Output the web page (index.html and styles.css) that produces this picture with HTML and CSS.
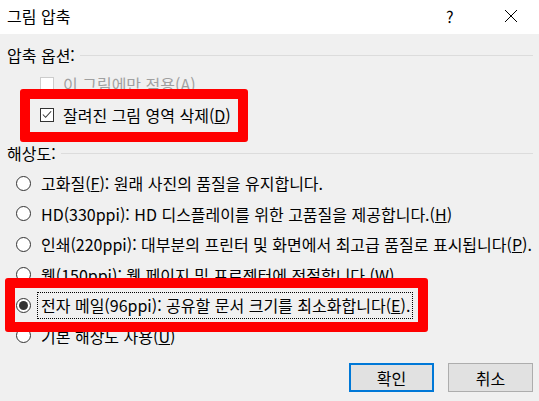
FILE: index.html
```html
<!DOCTYPE html>
<html lang="ko">
<head>
    <meta charset="utf-8">
    <title>그림 압축</title>
    <link rel="stylesheet" href="styles.css">
</head>
<body>
  <div class="dialog">
    <div class="titlebar">
      <span class="title">그림 압축</span>
      <span class="help">?</span>
      <span class="close">
        <svg width="14" height="14" viewBox="0 0 14 14"><path d="M1 1 L13 13 M13 1 L1 13" stroke="#000" stroke-width="1" fill="none"/></svg>
      </span>
    </div>

    <div class="content">
      <div class="group_head"><span>압축 옵션:</span><i class="line"></i></div>
      <div class="check_row disabled">
        <span class="box"></span>
        <span>이 그림에만 적용(<u>A</u>)</span>
      </div>
      <div class="check_row">
        <span class="box checked">
          <svg width="13" height="13" viewBox="0 0 13 13"><path d="M2 6.5 L5 9.5 L11 3" stroke="#333" stroke-width="1.1" fill="none"/></svg>
        </span>
        <span>잘려진 그림 영역 삭제(<u>D</u>)</span>
      </div>

      <div class="group_head second"><span>해상도:</span><i class="line"></i></div>
      <div class="radios">
        <div class="radio_row"><span class="radio"></span><span class="lbl">고화질(<u>F</u>): 원래 사진의 품질을 유지합니다.</span></div>
        <div class="radio_row"><span class="radio"></span><span class="lbl">HD(330ppi): HD 디스플레이를 위한 고품질을 제공합니다.(<u>H</u>)</span></div>
        <div class="radio_row"><span class="radio"></span><span class="lbl">인쇄(220ppi): 대부분의 프린터 및 화면에서 최고급 품질로 표시됩니다(<u>P</u>).</span></div>
        <div class="radio_row"><span class="radio"></span><span class="lbl">웹(150ppi): 웹 페이지 및 프로젝터에 적절합니다.(<u>W</u>)</span></div>
        <div class="radio_row"><span class="radio on"></span><span class="lbl focus">전자 메일(96ppi): 공유할 문서 크기를 최소화합니다(<u>E</u>).</span></div>
        <div class="radio_row"><span class="radio"></span><span class="lbl">기본 해상도 사용(<u>U</u>)</span></div>
      </div>

      <div class="buttons">
        <button class="btn default">확인</button>
        <button class="btn">취소</button>
      </div>
    </div>

    <div class="mark mark1"></div>
    <div class="mark mark2"></div>
  </div>
</body>
</html>
```
FILE: styles.css
```css
*{
    margin: 0;
    padding: 0;
    box-sizing: border-box;
}
body{
    background-color: #f0f0f0;
    font-family: "Noto Sans CJK KR", "Noto Sans", sans-serif;
    font-size: 16px;
    color: #000;
}
.dialog{
    position: relative;
    width: 539px;
    height: 401px;
    background-color: #f0f0f0;
    overflow: hidden;
}
.titlebar{
    height: 34px;
    background-color: #fff;
    display: flex;
    align-items: center;
    padding-left: 7px;
    padding-bottom: 2px;
}
.title{
    flex: 1;
    line-height: 20px;
}
.help{
    width: 14px;
    margin-right: 44px;
    line-height: 20px;
}
.close{
    width: 14px;
    height: 14px;
    margin-right: 21px;
    display: flex;
}

.content{
    padding: 0 6px 0 7px;
}
.group_head{
    height: 26px;
    margin-top: 8px;
    display: flex;
    align-items: center;
    line-height: 20px;
}
.group_head.second{
    margin-top: 10px;
}
.line{
    flex: 1;
    height: 1px;
    background-color: #dcdcdc;
    margin-left: 5px;
    margin-top: 1px;
}

.check_row{
    height: 31px;
    display: flex;
    align-items: center;
    padding-left: 33px;
    line-height: 20px;
}
.box{
    width: 14px;
    height: 14px;
    border: 1px solid #333;
    background-color: #fff;
    margin-right: 9px;
    display: flex;
    align-items: center;
    justify-content: center;
}
.check_row.disabled{
    color: #a0a0a0;
}
.check_row.disabled .box{
    border-color: #cccccc;
}

.radios{
    margin-top: 2px;
}
.radio_row{
    height: 30.5px;
    display: flex;
    align-items: center;
    padding-left: 9px;
    line-height: 20px;
}
.radio{
    width: 15px;
    height: 15px;
    border: 1px solid #333;
    border-radius: 50%;
    background-color: #fff;
    margin-right: 10px;
    display: flex;
    align-items: center;
    justify-content: center;
}
.radio.on::after{
    content: "";
    width: 9px;
    height: 9px;
    border-radius: 50%;
    background-color: #333;
}
.lbl.focus{
    margin-left: -3px;
    padding: 2px 2px 3px 3px;
    outline: 1px dotted #000;
}

.buttons{
    display: flex;
    justify-content: flex-end;
    gap: 14px;
    margin-top: 12px;
}
.btn{
    width: 85px;
    height: 29px;
    background-color: #e1e1e1;
    border: 1px solid #adadad;
    font-family: "Noto Sans CJK KR", sans-serif;
    font-size: 16px;
    color: #000;
}
.btn.default{
    border: 2px solid #0078d7;
}

/* red annotation boxes over the dialog */
.mark{
    position: absolute;
    border: 10px solid #ff0000;
    border-radius: 3px;
}
.mark1{
    left: 20px;
    top: 89px;
    width: 228px;
    height: 53px;
}
.mark2{
    left: 5px;
    top: 278px;
    width: 423px;
    height: 54px;
}
```
